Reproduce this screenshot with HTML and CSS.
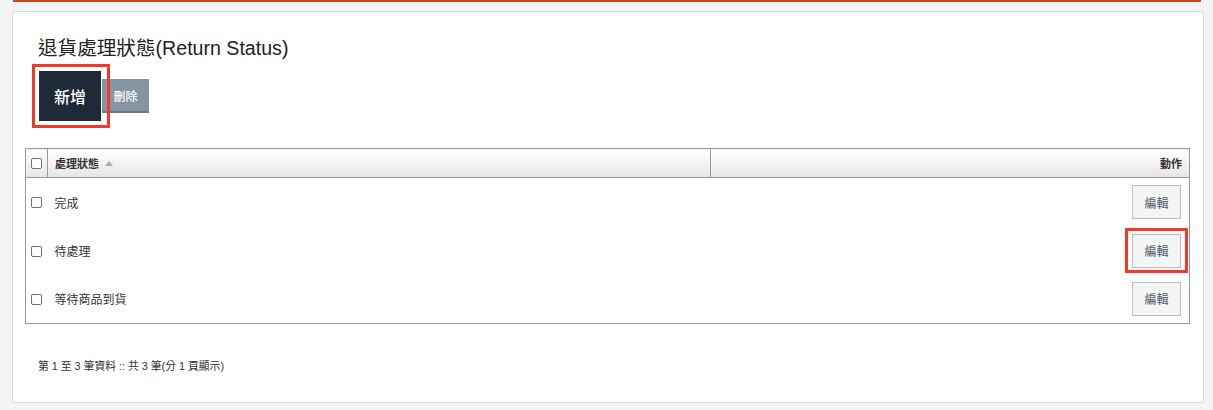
FILE: index.html
```html
<!DOCTYPE html>
<html lang="zh-Hant">
<head>
<meta charset="utf-8">
<title>退貨處理狀態</title>
<link rel="stylesheet" href="styles.css">
</head>
<body>
<div class="topline"></div>
<div class="card">
  <h1 class="title">退貨處理狀態(Return Status)</h1>
  <div class="toolbar">
    <button class="btn btn-add highlight">新增</button>
    <button class="btn btn-del">刪除</button>
  </div>
  <table class="grid">
    <thead>
      <tr>
        <th class="col-cb"><span class="cb"></span></th>
        <th class="col-name">處理狀態<span class="sort"></span></th>
        <th class="col-act">動作</th>
      </tr>
    </thead>
    <tbody>
      <tr>
        <td class="col-cb"><span class="cb"></span></td>
        <td class="col-name">完成</td>
        <td class="col-act"><button class="btn-edit">編輯</button></td>
      </tr>
      <tr>
        <td class="col-cb"><span class="cb"></span></td>
        <td class="col-name">待處理</td>
        <td class="col-act"><button class="btn-edit highlight-sm">編輯</button></td>
      </tr>
      <tr>
        <td class="col-cb"><span class="cb"></span></td>
        <td class="col-name">等待商品到貨</td>
        <td class="col-act"><button class="btn-edit">編輯</button></td>
      </tr>
    </tbody>
  </table>
  <p class="pager">第 1 至 3 筆資料 :: 共 3 筆(分 1 頁顯示)</p>
</div>
</body>
</html>
```
FILE: styles.css
```css
* { box-sizing: border-box; }
html, body { margin: 0; padding: 0; }
body {
  background: #f3f4f6;
  font-family: "Liberation Sans", "Noto Sans CJK TC", sans-serif;
  color: #222;
  width: 1213px;
  height: 410px;
  overflow: hidden;
}
.topline {
  height: 2px;
  margin: 0 12px 0 13px;
  background: #c8472d;
}
.card {
  margin: 9px 9px 0 12px;
  background: #fff;
  border: 1px solid #d9d9d9;
  border-radius: 3px;
  padding: 22px 13px 29px 12px;
  height: 392px;
}
.title {
  margin: 0;
  padding-left: 13px;
  font-size: 19.6px;
  line-height: 28px;
  font-weight: normal;
  color: #222;
}
.toolbar {
  margin-top: 9px;
  padding-left: 14px;
  display: flex;
  align-items: center;
  gap: 1px;
  height: 50px;
}
.btn {
  border: 0;
  margin: 0;
  padding: 0;
  font-family: inherit;
  color: #fff;
  cursor: pointer;
}
.btn-add {
  width: 62px;
  height: 50px;
  background: #1f2a38;
  font-size: 16px;
  font-weight: 500;
}
.btn-del {
  width: 47px;
  height: 34px;
  background: #8594a3;
  border-bottom: 2px solid #6c7886;
  font-size: 12px;
  font-weight: 500;
}
.highlight, .highlight-sm { position: relative; }
.highlight::after {
  content: "";
  position: absolute;
  left: -7px; right: -9px; top: -7px; bottom: -7px;
  border: 3px solid #f23a2a;
  z-index: 2;
  pointer-events: none;
}
.highlight-sm::after {
  content: "";
  position: absolute;
  left: -8px; right: -8px; top: -7px; bottom: -6px;
  border: 3px solid #f23a2a;
  pointer-events: none;
}
.grid {
  margin-top: 27px;
  width: 100%;
  border-collapse: collapse;
  border: 1px solid #999;
  font-size: 12px;
}
.grid th {
  height: 29px;
  padding: 0 7px;
  font-size: 11px;
  font-weight: bold;
  color: #333;
  background: linear-gradient(#ffffff, #e5e5e5);
  border-bottom: 1px solid #999;
  border-left: 1px solid #999;
  text-align: left;
}
.grid th:first-child { border-left: 0; }
.grid th.col-act { text-align: right; }
.grid td {
  height: 48.7px;
  padding: 0 7px;
  color: #333;
}
.col-cb { width: 22px; padding: 0 0 0 5px !important; }
.col-name { width: 663px; }
.grid td.col-name { padding-left: 7px; }
.grid td.col-act { text-align: right; padding-right: 8px; }
.cb {
  display: inline-block;
  width: 11px;
  height: 11px;
  border: 1px solid #707070;
  border-radius: 2px;
  background: #fff;
  vertical-align: middle;
}
.sort {
  display: inline-block;
  width: 0;
  height: 0;
  margin-left: 6px;
  border-left: 4px solid transparent;
  border-right: 4px solid transparent;
  border-bottom: 5px solid #aaa;
  vertical-align: 2px;
}
.btn-edit {
  width: 49px;
  height: 34px;
  margin: 0;
  padding: 0;
  background: #f3f4f6;
  border: 1px solid #bcbcbc;
  font-family: inherit;
  font-size: 12px;
  color: #4e5864;
  vertical-align: middle;
}
.pager {
  margin: 34px 0 0 0;
  padding-left: 13px;
  font-size: 10.8px;
  line-height: 16px;
  color: #333;
}
```
